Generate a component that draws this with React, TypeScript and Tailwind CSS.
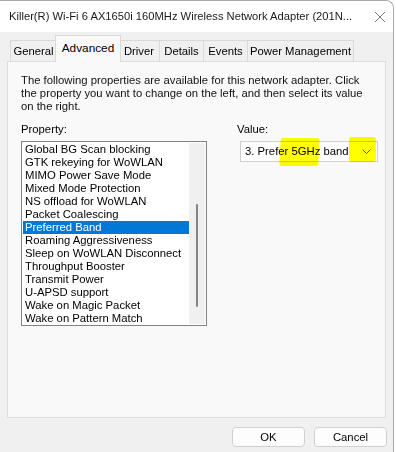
const TABS = [
  { label: "General", w: "w-[47px]", first: true },
  { label: "Advanced", w: "w-[66px]", active: true },
  { label: "Driver", w: "w-[41px]" },
  { label: "Details", w: "w-[44px]" },
  { label: "Events", w: "w-[44px]" },
  { label: "Power Management", w: "w-[106px]" },
];

const PROPS = [
  "Global BG Scan blocking",
  "GTK rekeying for WoWLAN",
  "MIMO Power Save Mode",
  "Mixed Mode Protection",
  "NS offload for WoWLAN",
  "Packet Coalescing",
  "Preferred Band",
  "Roaming Aggressiveness",
  "Sleep on WoWLAN Disconnect",
  "Throughput Booster",
  "Transmit Power",
  "U-APSD support",
  "Wake on Magic Packet",
  "Wake on Pattern Match",
];

export default function App() {
  return (
    <div className="w-[396px] h-[452px] bg-white overflow-hidden whitespace-nowrap text-[11.3px] text-black font-['Liberation_Sans',Arial,sans-serif]">
      <div className="w-[394px] h-[452px] bg-[#f0f0f0] border-t border-r border-[#a9a9a9] rounded-tr-[8px] overflow-hidden">
        {/* Title bar */}
        <div className="h-[31px] bg-white flex items-center justify-between pl-[9px] pr-[7px]">
          <span className="text-[#1a1a1a] text-[11.2px]">
            Killer(R) Wi-Fi 6 AX1650i 160MHz Wireless Network Adapter (201N...
          </span>
          <svg width="12" height="12" viewBox="0 0 12 12" className="shrink-0">
            <path d="M1 1 L11 11 M11 1 L1 11" stroke="#7a7a7a" strokeWidth="1" />
          </svg>
        </div>

        <div className="px-[7px]">
          {/* Tabs */}
          <div className="h-[29px] flex items-end pl-[3px]">
            {TABS.map((t) =>
              t.active ? (
                <div
                  key={t.label}
                  className={`${t.w} h-[27px] -mx-[2px] mb-[-1px] relative z-10 bg-[#f9f9f9] border border-b-0 border-[#d9d9d9] flex items-start justify-center pt-[4px] text-[11.8px]`}
                >
                  {t.label}
                </div>
              ) : (
                <div
                  key={t.label}
                  className={`${t.w} h-[21px] bg-[#f0f0f0] border-t border-r border-[#d9d9d9] ${
                    t.first ? "border-l" : ""
                  } flex items-center justify-center`}
                >
                  {t.label}
                </div>
              )
            )}
          </div>

          {/* Panel */}
          <div className="h-[357px] bg-[#f9f9f9] border border-[#dcdcdc] px-[13px] pt-[12px]">
            <p className="leading-[13px] text-[#111]">
              The following properties are available for this network adapter. Click
              <br />
              the property you want to change on the left, and then select its value
              <br />
              on the right.
            </p>

            <div className="flex gap-[30px] mt-[10px]">
              {/* Property list */}
              <div className="flex flex-col">
                <div className="leading-[13px] mb-[5px]">Property:</div>
                <div className="w-[186px] h-[185px] bg-white border border-[#828282] flex p-px">
                  <div className="flex-1 flex flex-col">
                    {PROPS.map((p) => (
                      <div
                        key={p}
                        className={`h-[13px] leading-[13px] pl-[2px] ${
                          p === "Preferred Band" ? "bg-[#0078d7] text-white" : ""
                        }`}
                      >
                        {p}
                      </div>
                    ))}
                  </div>
                  <div className="w-[16px] bg-[#f0f0f0] flex justify-center pt-[61px]">
                    <div className="w-[2px] h-[103px] bg-[#858585] rounded-full" />
                  </div>
                </div>
              </div>

              {/* Value */}
              <div className="flex flex-col">
                <div className="leading-[13px] mb-[5px]">Value:</div>
                <div className="relative ml-[3px] w-[138px] h-[21px] bg-white border border-[#cfcfcf] flex items-center justify-between pl-[4px] pr-[6px]">
                  <span>3. Prefer 5GHz band</span>
                  <svg width="9" height="5" viewBox="0 0 9 5">
                    <path d="M0.5 0.5 L4.5 4.5 L8.5 0.5" fill="none" stroke="#606060" strokeWidth="1" />
                  </svg>
                  {/* highlighter marks */}
                  <div className="absolute left-[39px] top-[-4px] w-[39px] h-[28px] bg-[#ffff00] mix-blend-multiply rounded-[3px] -skew-x-3" />
                  <div className="absolute left-[108px] top-[-5px] w-[27px] h-[25px] bg-[#ffff00] mix-blend-multiply rounded-[3px]" />
                </div>
              </div>
            </div>
          </div>

          {/* Buttons */}
          <div className="flex justify-end gap-[9px] mt-[9px]">
            <button className="w-[73px] h-[20px] bg-[#fdfdfd] border border-[#d0d0d0] rounded-[4px] text-[11.3px]">
              OK
            </button>
            <button className="w-[73px] h-[20px] bg-[#fdfdfd] border border-[#d0d0d0] rounded-[4px] text-[11.3px] mr-[-1px]">
              Cancel
            </button>
          </div>
        </div>
      </div>
    </div>
  );
}
